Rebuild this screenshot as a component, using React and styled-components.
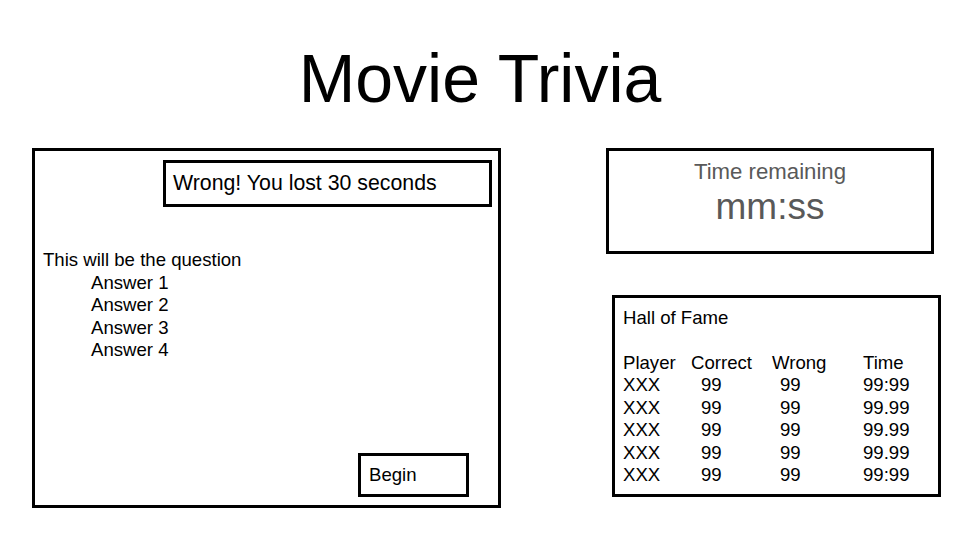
import React from "react";
import styled, { createGlobalStyle } from "styled-components";

const GlobalStyle = createGlobalStyle`
  html, body { margin: 0; padding: 0; background: #ffffff; }
  body { font-family: "Liberation Sans", Arial, sans-serif; color: #000; }
  * { box-sizing: border-box; }
`;

const Page = styled.div`
  width: 960px;
  height: 540px;
  overflow: hidden;
  display: flex;
  flex-direction: column;
`;

const Title = styled.h1`
  margin: 40px 0 0;
  height: 76px;
  font-size: 68px;
  line-height: 76px;
  font-weight: 400;
  text-align: center;
`;

const Main = styled.div`
  display: flex;
  align-items: flex-start;
  margin-top: 32px;
  padding-left: 32px;
`;

const GamePanel = styled.section`
  width: 469px;
  height: 360px;
  border: 3px solid #000;
  display: flex;
  flex-direction: column;
`;

const Feedback = styled.div`
  align-self: flex-end;
  width: 329px;
  height: 47px;
  margin: 9px 6px 0 0;
  border: 3px solid #000;
  padding-left: 7px;
  font-size: 21.3px;
  line-height: 40px;
  white-space: nowrap;
`;

const Question = styled.div`
  margin-top: 42px;
  padding-left: 8px;
  font-size: 18.6px;
  line-height: 22.5px;
`;

const AnswerList = styled.ul`
  list-style: none;
  margin: 0;
  padding: 0 0 0 56px;
`;

const Answer = styled.li`
  font-size: 18.6px;
  line-height: 22.5px;
`;

const BeginButton = styled.div`
  align-self: flex-end;
  margin: auto 29px 8px 0;
  width: 111px;
  height: 44px;
  border: 3px solid #000;
  padding-left: 8px;
  font-size: 18.6px;
  line-height: 38px;
`;

const SideColumn = styled.div`
  margin-left: 105px;
  display: flex;
  flex-direction: column;
`;

const TimerBox = styled.section`
  width: 328px;
  height: 106px;
  border: 3px solid #000;
  padding-top: 7px;
  text-align: center;
  color: #595959;
`;

const TimerLabel = styled.div`
  font-size: 22.2px;
  line-height: 28px;
`;

const TimerValue = styled.div`
  font-size: 37px;
  line-height: 42px;
`;

const FameBox = styled.section`
  margin: 41px 0 0 6px;
  width: 329px;
  height: 202px;
  border: 3px solid #000;
  padding: 8.5px 0 0 8px;
  font-size: 18.6px;
  line-height: 22.5px;
`;

const FameTitle = styled.div`
  height: 45px;
`;

const FameGrid = styled.div`
  display: grid;
  grid-template-columns: 68px 81px 91px auto;
`;

const Cell = styled.div`
  padding-left: ${(p) => p.$indent || 0}px;
  white-space: nowrap;
`;

const rows = [
  ["XXX", "99", "99", "99:99"],
  ["XXX", "99", "99", "99.99"],
  ["XXX", "99", "99", "99.99"],
  ["XXX", "99", "99", "99.99"],
  ["XXX", "99", "99", "99:99"],
];

export default function App() {
  return (
    <Page>
      <GlobalStyle />
      <Title>Movie Trivia</Title>
      <Main>
        <GamePanel>
          <Feedback>Wrong! You lost 30 seconds</Feedback>
          <Question>This will be the question</Question>
          <AnswerList>
            <Answer>Answer 1</Answer>
            <Answer>Answer 2</Answer>
            <Answer>Answer 3</Answer>
            <Answer>Answer 4</Answer>
          </AnswerList>
          <BeginButton>Begin</BeginButton>
        </GamePanel>
        <SideColumn>
          <TimerBox>
            <TimerLabel>Time remaining</TimerLabel>
            <TimerValue>mm:ss</TimerValue>
          </TimerBox>
          <FameBox>
            <FameTitle>Hall of Fame</FameTitle>
            <FameGrid>
              <Cell>Player</Cell>
              <Cell>Correct</Cell>
              <Cell>Wrong</Cell>
              <Cell>Time</Cell>
              {rows.map((r, i) => (
                <React.Fragment key={i}>
                  <Cell>{r[0]}</Cell>
                  <Cell $indent={10}>{r[1]}</Cell>
                  <Cell $indent={8}>{r[2]}</Cell>
                  <Cell>{r[3]}</Cell>
                </React.Fragment>
              ))}
            </FameGrid>
          </FameBox>
        </SideColumn>
      </Main>
    </Page>
  );
}
